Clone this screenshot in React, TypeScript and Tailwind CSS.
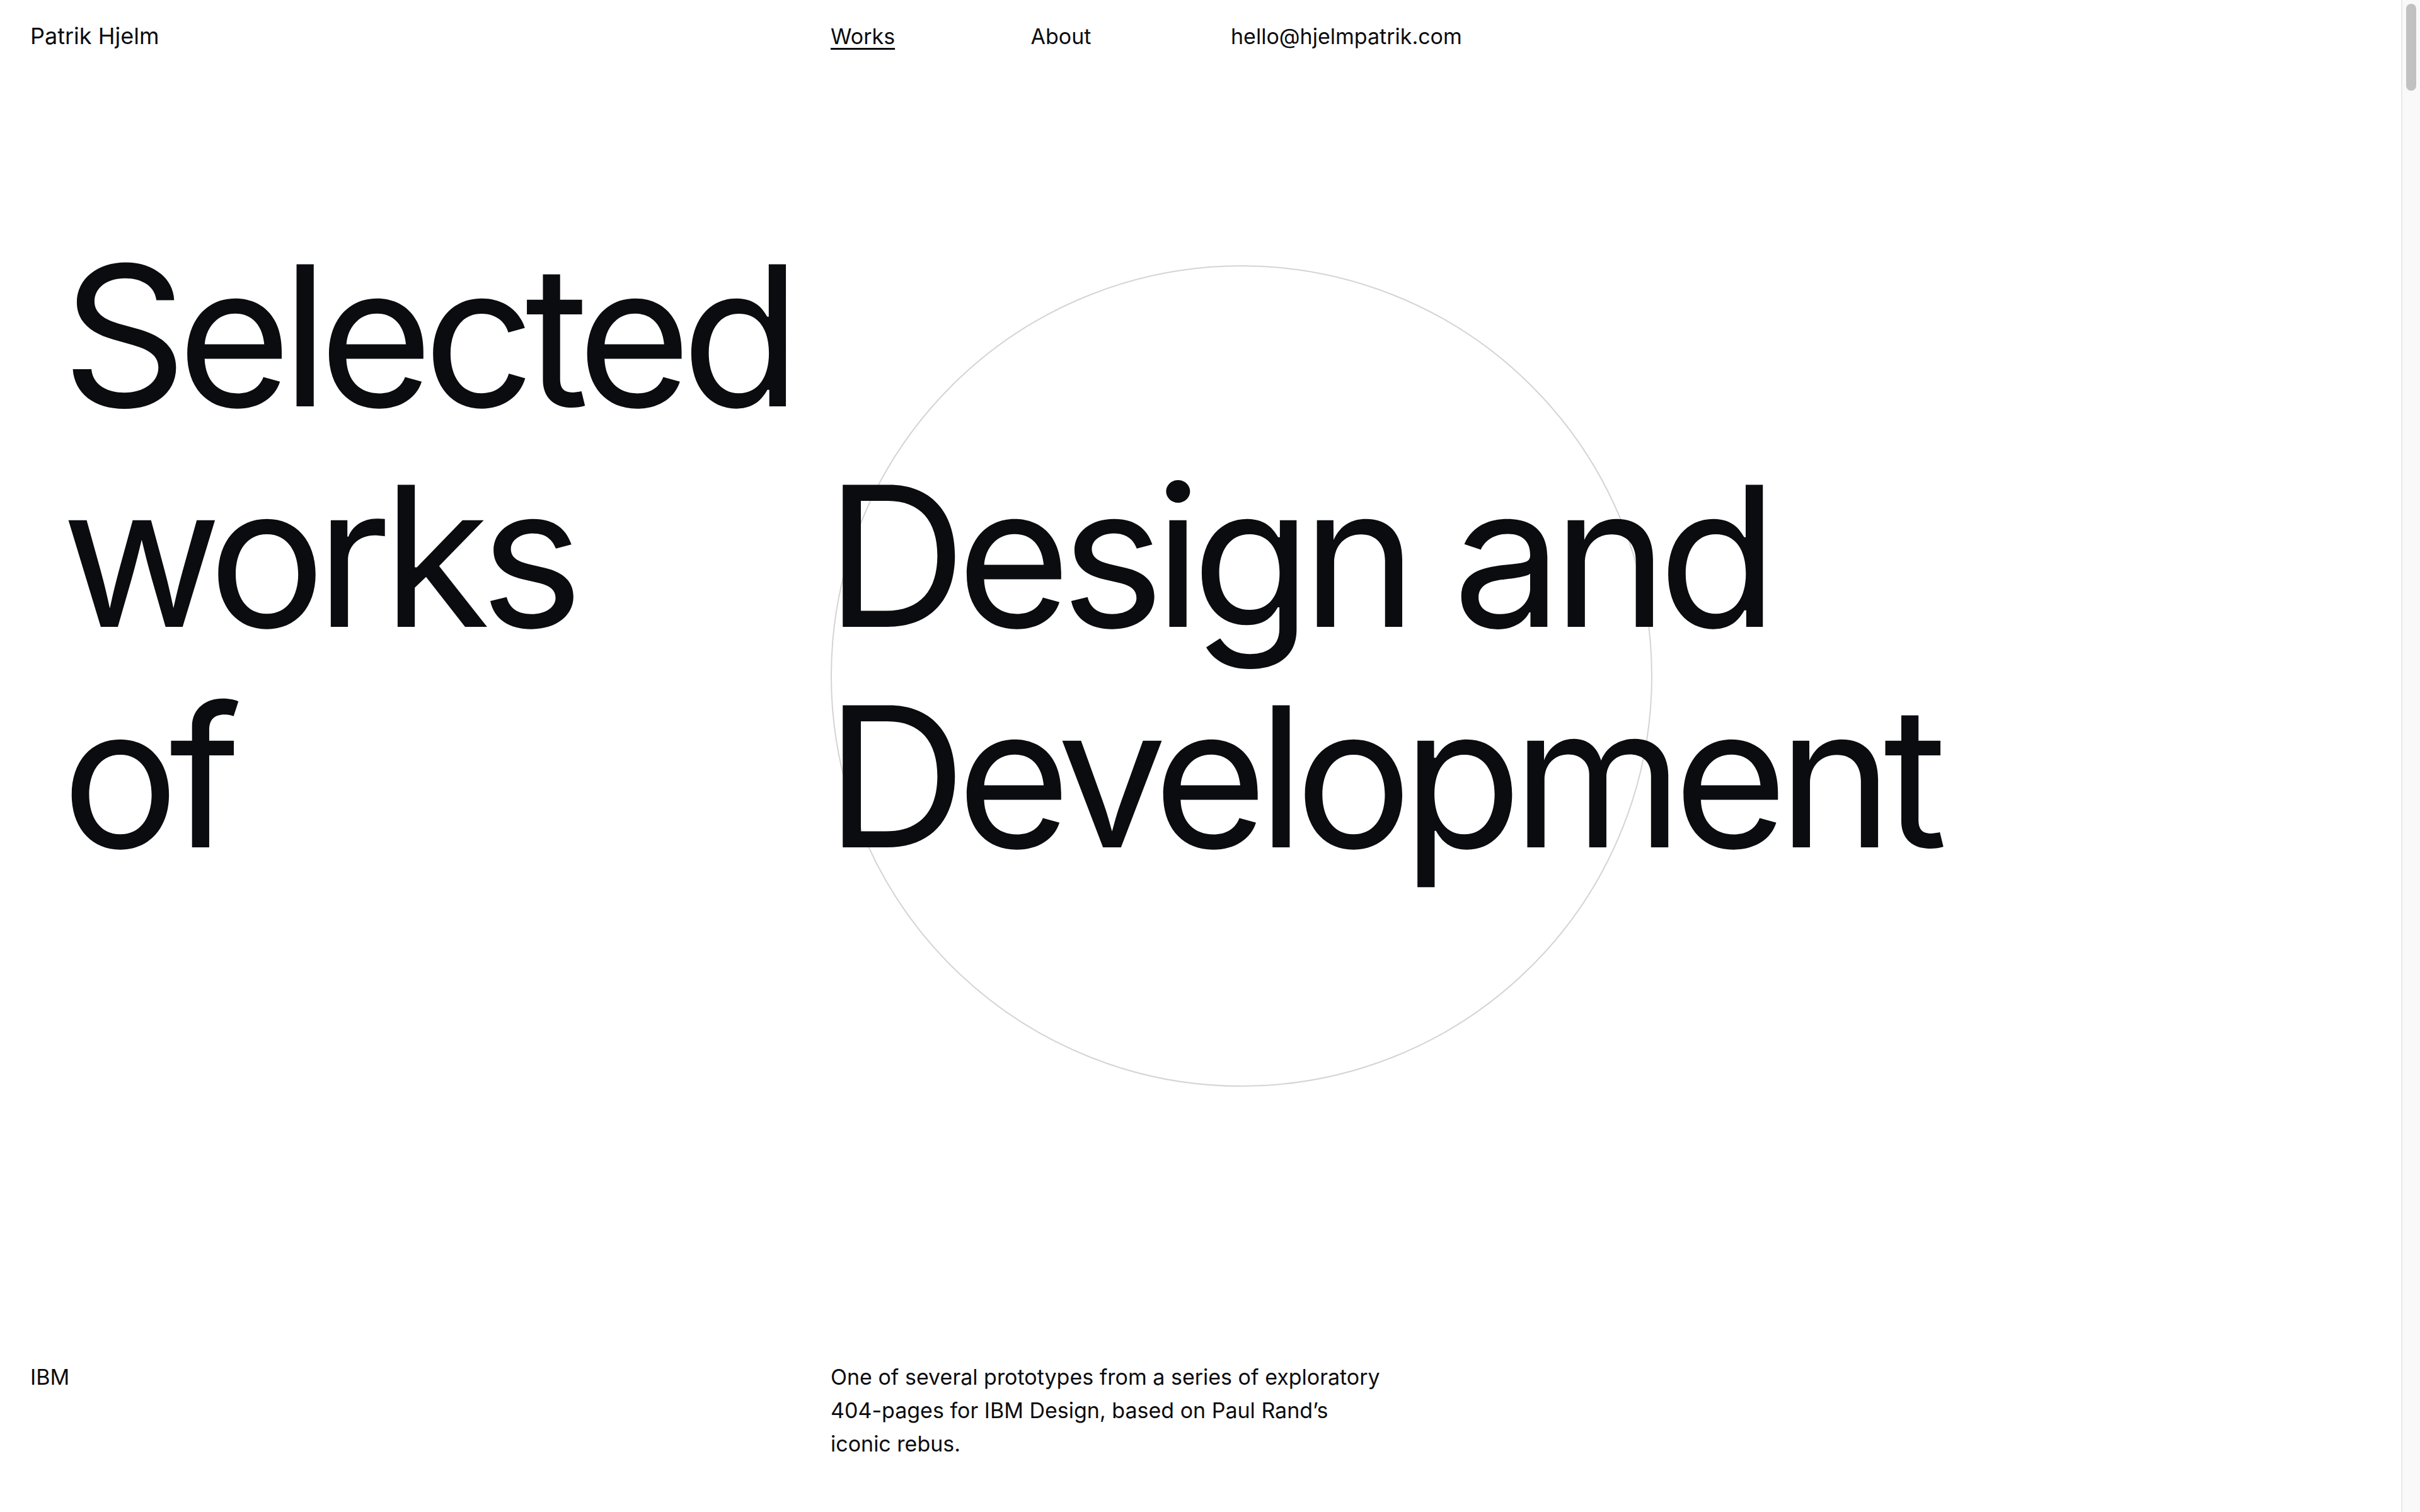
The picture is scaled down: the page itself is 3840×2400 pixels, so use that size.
const ink = "text-[#0b0c0f]";

function Header() {
  return (
    <header className="grid grid-cols-12 gap-x-[96px] px-[48px] pt-[32px] text-[36px] leading-[51px]">
      <div className="col-span-4">Patrik Hjelm</div>
      <nav className="col-span-3 col-start-5 grid grid-cols-3 gap-x-[96px] text-[34px]">
        <a href="#" className="underline decoration-[3px] underline-offset-[6px]">
          Works
        </a>
        <a href="#">About</a>
        <a href="#" className="whitespace-nowrap">
          hello@hjelmpatrik.com
        </a>
      </nav>
    </header>
  );
}

function Hero() {
  return (
    <section className="grid grid-cols-12 gap-x-[96px] px-[48px] pt-[275px] text-[310px] leading-[350px] tracking-[-0.05em]">
      <h1 className="col-span-4 pl-[50px] font-normal">
        Selected
        <br />
        works
        <br />
        of
      </h1>
      <div className="col-span-8 col-start-5 grid">
        {/* ring sits behind the headline */}
        <div className="[grid-area:1/1] mt-[63px] h-[1304px] w-[1304px] rounded-full border-2 border-[#d4d4d4]" />
        <p className="[grid-area:1/1] relative -ml-[8px]">
          <br />
          Design and
          <br />
          Development
        </p>
      </div>
    </section>
  );
}

function Project() {
  return (
    <section className="grid grid-cols-12 gap-x-[96px] px-[48px] pt-[434px] text-[34px] leading-[53px]">
      <div className="col-span-4">IBM</div>
      <p className="col-span-4 col-start-5 max-w-[880px]">
        One of several prototypes from a series of exploratory 404-pages for
        IBM Design, based on Paul Rand’s iconic rebus.
      </p>
    </section>
  );
}

function Scrollbar() {
  return (
    <aside className="w-[30px] shrink-0 border-l-2 border-[#e8e8e8] bg-[#f9f9f9]">
      <div className="ml-[6px] mt-[6px] h-[138px] w-[16px] rounded-full bg-[#c1c1c1]" />
    </aside>
  );
}

export default function App() {
  return (
    <div
      className={`flex h-screen overflow-hidden bg-white ${ink} font-['Inter','Liberation_Sans',sans-serif]`}
    >
      <main className="min-w-0 flex-1">
        <Header />
        <Hero />
        <Project />
      </main>
      <Scrollbar />
    </div>
  );
}
